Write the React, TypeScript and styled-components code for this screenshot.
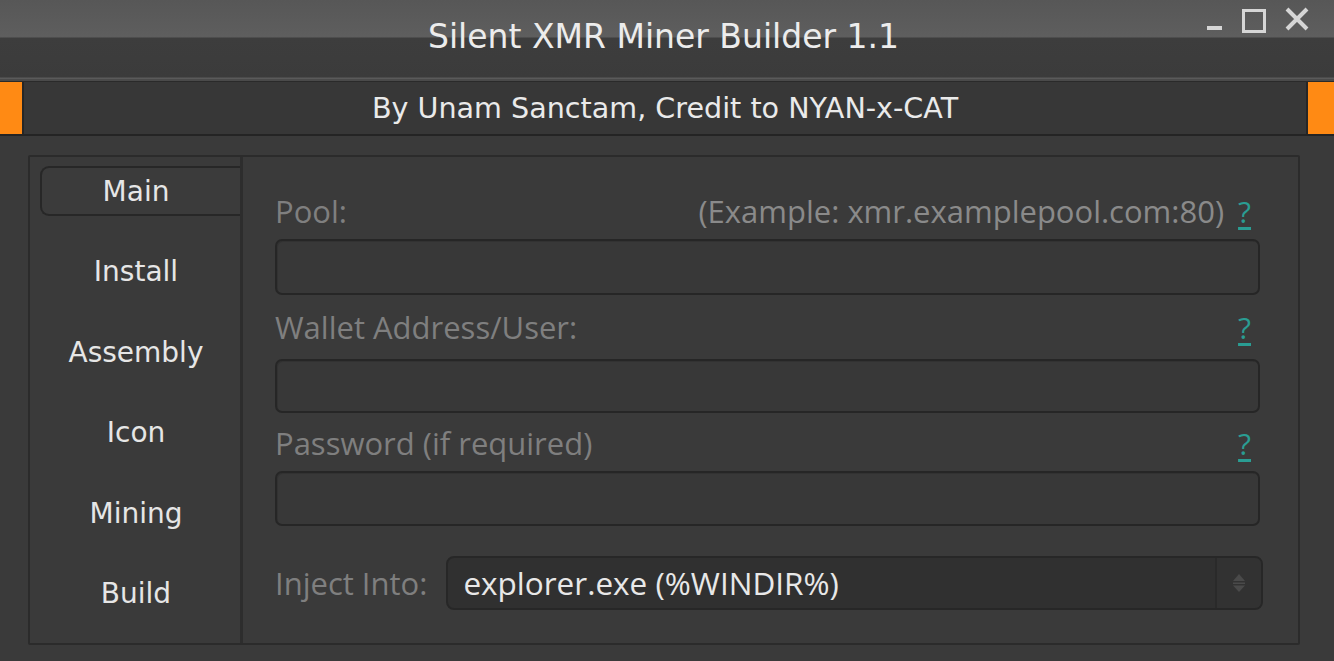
import React from "react";
import styled, { createGlobalStyle } from "styled-components";

const Global = createGlobalStyle`
  html, body { margin: 0; padding: 0; background: #3a3a3a; }
  body { width: 1334px; height: 661px; overflow: hidden; }
`;

const Window = styled.div`
  width: 1334px;
  height: 661px;
  background: #3a3a3a;
  display: flex;
  flex-direction: column;
  font-family: "DejaVu Sans", Verdana, sans-serif;
`;

const TitleBar = styled.div`
  height: 79px;
  display: grid;
  grid-template-columns: 1fr auto 1fr;
  background: linear-gradient(#575757 0px, #5e5e5e 37px, #3d3d3d 38px, #3b3b3b 77px, #5a5a5a 78px);
  border-bottom: 2px solid #4a4a4a;
`;

const Title = styled.div`
  grid-column: 2;
  align-self: start;
  margin-top: 17px;
  margin-right: 7px;
  font-size: 33px;
  line-height: 40px;
  color: #ececec;
`;

const Controls = styled.div`
  grid-column: 3;
  justify-self: end;
  align-self: start;
  display: flex;
  align-items: flex-start;
  margin-top: 7px;
  margin-right: 14px;
`;

const CtrlBtn = styled.div<{ $w: number }>`
  width: ${(p) => p.$w}px;
  height: 28px;
  display: flex;
  align-items: center;
  justify-content: center;
`;

const Banner = styled.div`
  height: 52px;
  display: flex;
  align-items: stretch;
  background: #373737;
  border-top: 1px solid #2a2a2a;
  border-bottom: 2px solid #242424;
`;

const Accent = styled.div<{ $w: number }>`
  width: ${(p) => p.$w}px;
  background: #ff8a14;
  flex: none;
`;

const BannerText = styled.div`
  flex: 1;
  display: flex;
  align-items: center;
  justify-content: center;
  border-left: 2px solid #262626;
  border-right: 2px solid #262626;
  font-size: 28.6px;
  color: #eaeaea;
`;

const Body = styled.div`
  flex: 1;
  padding: 19px 34px 16px 28px;
  display: flex;
`;

const Panel = styled.div`
  flex: 1;
  display: flex;
  border: 2px solid #2b2b2b;
  border-radius: 2px;
  background: #3a3a3a;
`;

const TabList = styled.div`
  width: 210px;
  padding-top: 9px;
  display: flex;
  flex-direction: column;
  gap: 30.5px;
  border-right: 3px solid #2d2d2d;
`;

const Tab = styled.div<{ $active?: boolean }>`
  height: 50px;
  margin-left: 10px;
  padding-right: 10px;
  display: flex;
  align-items: center;
  justify-content: center;
  font-size: 28px;
  color: #e6e6e6;
  box-sizing: border-box;
  border: 2px solid ${(p) => (p.$active ? "#272727" : "transparent")};
  border-right: none;
  border-radius: 9px 0 0 9px;
  background: ${(p) => (p.$active ? "#3b3b3b" : "transparent")};
`;

const Content = styled.div`
  flex: 1;
  padding: 36px 38px 0 32px;
  display: flex;
  flex-direction: column;
  font-family: "Open Sans", sans-serif;
`;

const LabelRow = styled.div<{ $gap?: number }>`
  height: 36px;
  margin-bottom: ${(p) => p.$gap ?? 10}px;
  display: flex;
  align-items: center;
  justify-content: space-between;
`;

const Label = styled.span`
  font-size: 31px;
  color: #7f7f7f;
  white-space: nowrap;
`;

const Hint = styled.span`
  display: flex;
  align-items: center;
  gap: 14px;
  font-size: 31px;
  color: #8a8a8a;
`;

const Help = styled.span`
  color: #2a9d93;
  text-decoration: underline;
  text-underline-offset: 4px;
  margin-right: 9px;
  font-size: 30px;
`;

const Input = styled.div<{ $h?: number; $after?: number }>`
  height: ${(p) => p.$h ?? 56}px;
  box-sizing: border-box;
  margin-bottom: ${(p) => p.$after ?? 14}px;
  border: 2px solid #262626;
  border-radius: 7px;
  background: #383838;
  box-shadow: inset 1px 1px 0 #323232;
`;

const InjectRow = styled.div`
  margin-top: 16px;
  display: flex;
  align-items: center;
  gap: 19px;
`;

const Select = styled.div`
  flex: 1;
  height: 54px;
  box-sizing: border-box;
  margin-right: -3px;
  display: flex;
  align-items: stretch;
  border: 2px solid #272727;
  border-radius: 8px;
  background: #303030;
  overflow: hidden;
`;

const SelectValue = styled.div`
  flex: 1;
  display: flex;
  align-items: center;
  padding-left: 15px;
  padding-bottom: 2px;
  font-size: 31.5px;
  color: #e8e8e8;
`;

const Spinner = styled.div`
  width: 44px;
  display: flex;
  align-items: center;
  justify-content: center;
  border-left: 2px solid #2a2a2a;
  background: #323232;
`;

const tabs = ["Main", "Install", "Assembly", "Icon", "Mining", "Build"];

export default function App() {
  return (
    <>
      <Global />
      <Window>
        <TitleBar>
          <Title>Silent XMR Miner Builder 1.1</Title>
          <Controls>
            <CtrlBtn $w={40}>
              <svg width="18" height="28" viewBox="0 0 18 28">
                <rect x="2" y="19" width="15" height="4" fill="#d6d6d6" />
              </svg>
            </CtrlBtn>
            <CtrlBtn $w={40}>
              <svg width="26" height="28" viewBox="0 0 26 28">
                <rect x="2.5" y="3.5" width="21" height="21" fill="none" stroke="#d6d6d6" strokeWidth="3" />
              </svg>
            </CtrlBtn>
            <CtrlBtn $w={46}>
              <svg width="26" height="28" viewBox="0 0 26 28">
                <path d="M3 2 L23 22 M23 2 L3 22" stroke="#d6d6d6" strokeWidth="4" />
              </svg>
            </CtrlBtn>
          </Controls>
        </TitleBar>
        <Banner>
          <Accent $w={22} />
          <BannerText>By Unam Sanctam, Credit to NYAN-x-CAT</BannerText>
          <Accent $w={26} />
        </Banner>
        <Body>
          <Panel>
            <TabList>
              {tabs.map((t, i) => (
                <Tab key={t} $active={i === 0}>
                  {t}
                </Tab>
              ))}
            </TabList>
            <Content>
              <LabelRow>
                <Label>Pool:</Label>
                <Hint>
                  (Example: xmr.examplepool.com:80)
                  <Help>?</Help>
                </Hint>
              </LabelRow>
              <Input />
              <LabelRow $gap={14}>
                <Label>Wallet Address/User:</Label>
                <Help>?</Help>
              </LabelRow>
              <Input $h={54} $after={12} />
              <LabelRow>
                <Label>Password (if required)</Label>
                <Help>?</Help>
              </LabelRow>
              <Input $h={55} />
              <InjectRow>
                <Label>Inject Into:</Label>
                <Select>
                  <SelectValue>explorer.exe (%WINDIR%)</SelectValue>
                  <Spinner>
                    <svg width="18" height="28" viewBox="0 0 18 28">
                      <path d="M9 5 L15 12 L3 12 Z" fill="#4a4a4a" />
                      <rect x="3" y="13.5" width="12" height="1.5" fill="#4a4a4a" />
                      <path d="M9 23 L15 16.5 L3 16.5 Z" fill="#4a4a4a" />
                    </svg>
                  </Spinner>
                </Select>
              </InjectRow>
            </Content>
          </Panel>
        </Body>
      </Window>
    </>
  );
}
